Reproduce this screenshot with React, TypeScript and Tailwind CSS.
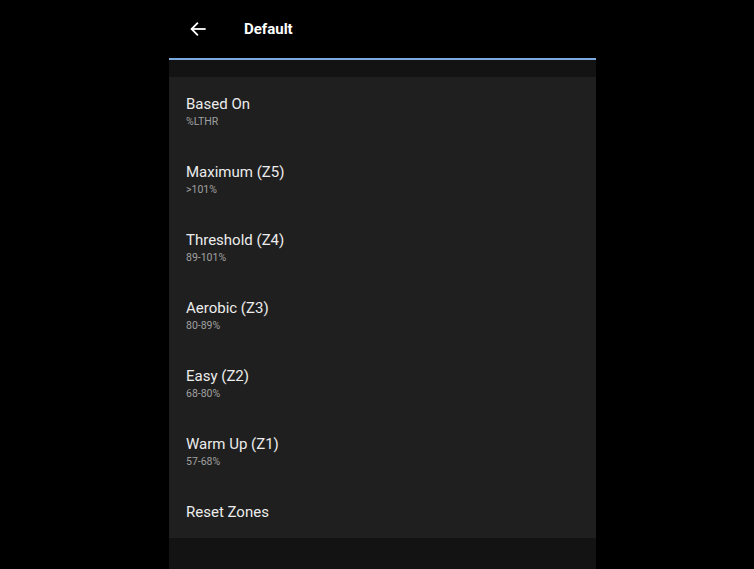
import React from "react";

const rows = [
  { t: "Based On", s: "%LTHR" },
  { t: "Maximum (Z5)", s: ">101%" },
  { t: "Threshold (Z4)", s: "89-101%" },
  { t: "Aerobic (Z3)", s: "80-89%" },
  { t: "Easy (Z2)", s: "68-80%" },
  { t: "Warm Up (Z1)", s: "57-68%" },
];

export default function App() {
  return (
    <div className="w-[754px] h-[569px] bg-black flex pl-[169px] overflow-hidden" style={{ fontFamily: "Roboto, 'Noto Sans', sans-serif" }}>
      <div className="w-[427px] flex flex-col bg-[#131313]">
        <div className="h-[58px] bg-black flex items-center shrink-0">
          <svg className="ml-[20px]" width="18" height="18" viewBox="0 0 24 24" fill="none" stroke="#ffffff" strokeWidth="2.4" strokeLinecap="square">
            <path d="M21 12H4" />
            <path d="M11 4.5L3.5 12L11 19.5" strokeLinejoin="miter" />
          </svg>
          <span className="ml-[37px] text-white font-bold text-[15px]">Default</span>
        </div>
        <div className="h-[2px] bg-[#7aaade] shrink-0" />
        <div className="h-[17px] shrink-0" />
        <div className="bg-[#1f1f1f] flex flex-col">
          {rows.map((r) => (
            <div key={r.t} className="pl-[17px] pt-[17px] pb-[16px] flex flex-col">
              <span className="text-[15px] leading-[20px] text-[#ececec]">{r.t}</span>
              <span className="text-[10.5px] leading-[15px] text-[#a0a0a0]">{r.s}</span>
            </div>
          ))}
          <div className="pl-[17px] pt-[17px] pb-[16px] flex flex-col">
            <span className="text-[15px] leading-[20px] text-[#ececec]">Reset Zones</span>
          </div>
        </div>
      </div>
    </div>
  );
}
